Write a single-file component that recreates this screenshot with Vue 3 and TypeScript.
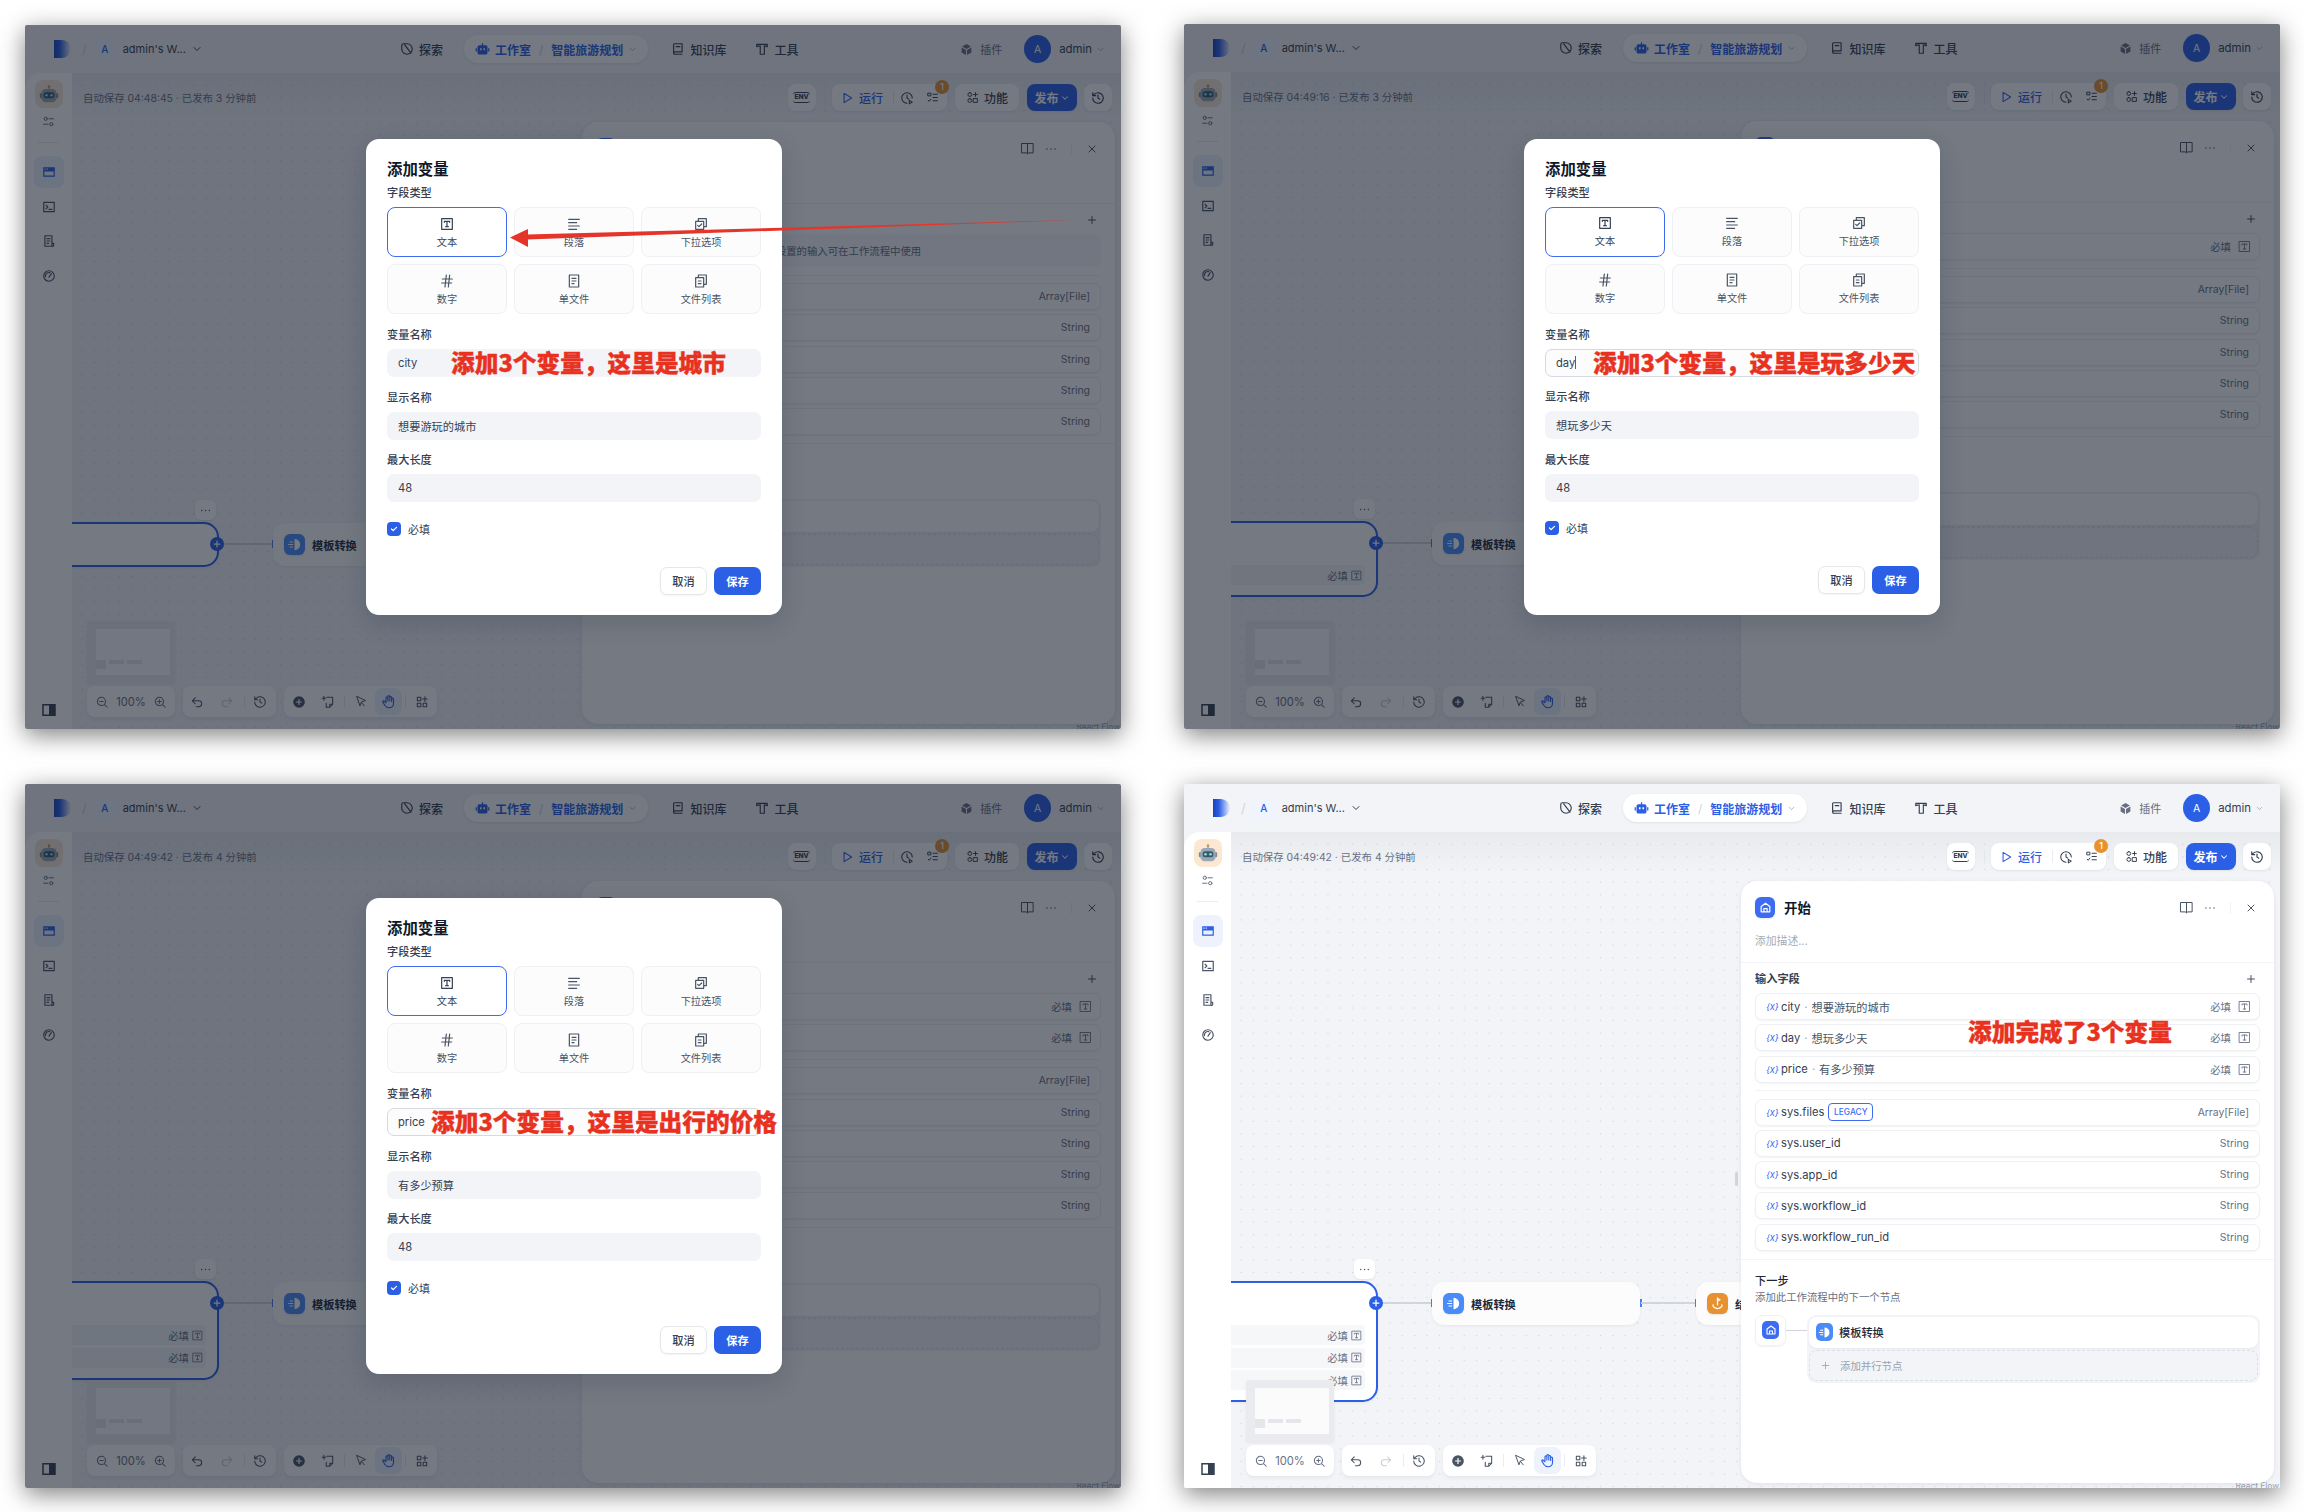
<script setup lang="ts">
import { h } from "vue"

interface Field { name: string; label: string }
interface Win {
  saved: string
  mins: number
  dim: boolean
  vars: Field[]
  focus?: boolean
  caret?: boolean
  form?: Field
  note: string
  noteX: number
  noteY: number
  arrow?: boolean
  shift?: boolean
}

const paths: Record<string, string> = {
  explore: "M12 3a9 9 0 1 1-9 9V6a3 3 0 0 1 3-3z M8 5l11 14",
  robot: "M11 2h2v3h4a3 3 0 0 1 3 3v9a3 3 0 0 1-3 3H7a3 3 0 0 1-3-3V8a3 3 0 0 1 3-3h4z M8 10v3h2.5v-3z M13.5 10v3H16v-3z M1 10h2v5H1z M21 10h2v5h-2z",
  book: "M6 3h13v14H7a2.5 2.5 0 0 0-2.5 2V5A2 2 0 0 1 6 3z M4.5 19A2 2 0 0 0 7 21h12 M9 8h6",
  tool: "M3 4h18v4l-5-1.5V21H9V6.5L3 8z",
  cube: "M12 2l8 4.5-8 4.5-8-4.5z M3 8.5l8 4.5v9l-8-4.5z M21 8.5l-8 4.5v9l8-4.5z",
  chev: "M6 9l6 6 6-6",
  sliders: "M13 7h8 M3 17h8 M10 7a3 3 0 1 1-6 0 3 3 0 0 1 6 0z M20 17a3 3 0 1 1-6 0 3 3 0 0 1 6 0z",
  win: "M2 4h20v16H2z M4 11h16v7H4z M4 6v2h2V6z M8 6v2h2V6z",
  term: "M3 4h18v16H3z M7 9l3 3-3 3 M12 16h5",
  log: "M5 3h12v18H5z M8.5 8h5 M8.5 12h5 M8.5 16h3 M17 16h3v3a2 2 0 0 1-3 2",
  gauge: "M12 3a9 9 0 1 0 0 18 9 9 0 0 0 0-18z M12 14l4-6 M6 13a6 6 0 0 1 7.5-6.8",
  play: "M7 4l13 8-13 8z",
  clock: "M21 12a9 9 0 1 0-9 9 M12 7v5l3 2 M16 16l5 3-5 3z",
  check: "M13 6h8 M13 12h8 M4 4h5v5H4z M4 17l2 2 3-4 M13 18h8",
  apps: "M7 3a3.5 3.5 0 1 1 0 7 3.5 3.5 0 0 1 0-7z M7 14a3.5 3.5 0 1 1 0 7 3.5 3.5 0 0 1 0-7z M17.5 3v7 M14 6.5h7 M14 14h7v7h-7z",
  hist: "M3 12a9 9 0 1 0 3-6.7L3 8 M3 3v5h5 M12 7v5l3 2",
  home: "M4 10l8-6 8 6v10H4z M9 20v-6h6v6",
  open: "M3 4h18v15h-7l-2 1.5L10 19H3z M12 4v16",
  dots: "M5 12h.01 M12 12h.01 M19 12h.01",
  x: "M6 6l12 12 M18 6L6 18",
  plus: "M12 5v14 M5 12h14",
  text: "M4 4h16v16H4z M8 9.5V8h8v1.5 M12 8v8 M10 16h4",
  para: "M4 5h16 M4 10h12 M4 15h16 M4 20h12",
  select: "M8 8V4h12v12h-4 M4 8h12v12H4z M7 14l2 2 4-4",
  hash: "M5 9h15 M4 15h15 M11 3L9 21 M16 3l-2 18",
  file: "M5 3h14v18H5z M9 8h6 M9 12h6 M9 16h3",
  files: "M8 7V3h12v14h-4 M4 7h12v14H4z M8 12h4 M8 16h4",
  zoomout: "M11 4a7 7 0 1 1 0 14 7 7 0 0 1 0-14z M8 11h6 M21 21l-5-5",
  zoomin: "M11 4a7 7 0 1 1 0 14 7 7 0 0 1 0-14z M8 11h6 M11 8v6 M21 21l-5-5",
  undo: "M9 5L4 10l5 5 M4 10h11a5 5 0 0 1 0 10h-4",
  redo: "M15 5l5 5-5 5 M20 10H9a5 5 0 0 0 0 10h4",
  addc: "M12 2a10 10 0 1 0 0 20 10 10 0 0 0 0-20z M11 7h2v4h4v2h-4v4h-2v-4H7v-2h4z",
  note: "M10 4h10v12l-5 5H9v-7 M15 21v-5h5 M5 2v7 M2 5.5h6",
  cursor: "M5 3l6 17 2.5-7 7-2.5z M14 14l5 6",
  hand: "M8 12V6a1.5 1.5 0 0 1 3 0v5 M11 11V4a1.5 1.5 0 0 1 3 0v7 M14 11V5.5a1.5 1.5 0 0 1 3 0V12 M17 12V8a1.5 1.5 0 0 1 3 0v7c0 4-3 7-7 7-3 0-5-1-7-4l-3-5c-.8-1.4 1.2-2.6 2.2-1.4L8 14",
  grid: "M4 4h6v6H4z M4 14h6v6H4z M14 14h6v6h-6z M17 3v8 M13 7h8",
  tpl: "M12 4a8 8 0 0 1 0 16z M5 7.6h5v1.6H5z M3 11.2h7v1.6H3z M5 14.8h5v1.6H5z",
  end: "M12 3v11 M12 4l4 2-4 2 M5 14c-1.5 3 3 6 7 6s8.5-3 7-6",
  toggle: "M3 4h18v16H3z M5 6h7v12H5z",
  tick: "M6 12l4 4 8-8",
}

const Ico = (p: { n: string; s?: number; w?: number }) =>
  h(
    "svg",
    { viewBox: "0 0 24 24", width: p.s ?? 14, height: p.s ?? 14, fill: "none", stroke: "currentColor", "stroke-width": p.w ?? 2, "stroke-linecap": "round", "stroke-linejoin": "round" },
    h("path", { d: paths[p.n], "fill-rule": "evenodd" }),
  )
Ico.props = ["n", "s", "w"]

const city = { name: "city", label: "想要游玩的城市" }
const day = { name: "day", label: "想玩多少天" }
const price = { name: "price", label: "有多少预算" }

const windows: Win[] = [
  { saved: "04:48:45", mins: 3, dim: true, vars: [], form: city, note: "添加3个变量，这里是城市", noteX: 426, noteY: 321, arrow: true },
  { saved: "04:49:16", mins: 3, dim: true, vars: [city], form: day, focus: true, caret: true, note: "添加3个变量，这里是玩多少天", noteX: 409, noteY: 322, shift: true },
  { saved: "04:49:42", mins: 4, dim: true, vars: [city, day], form: price, focus: true, note: "添加3个变量，这里是出行的价格", noteX: 406, noteY: 321 },
  { saved: "04:49:42", mins: 4, dim: false, vars: [city, day, price], note: "添加完成了3个变量", noteX: 784, noteY: 231 },
]

const sideIcons = ["term", "log", "gauge"]
const fieldTypes = [
  { icon: "text", label: "文本" },
  { icon: "para", label: "段落" },
  { icon: "select", label: "下拉选项" },
  { icon: "hash", label: "数字" },
  { icon: "file", label: "单文件" },
  { icon: "files", label: "文件列表" },
]
const sysVars = ["sys.user_id", "sys.app_id", "sys.workflow_id", "sys.workflow_run_id"]
</script>

<template>
  <div class="page">
    <div v-for="(w, i) in windows" :key="i" class="win" :class="{ shift: w.shift }">
      <header class="topbar">
        <div class="brand">
          <svg class="logo" width="18" height="18" viewBox="0 0 18 18">
            <defs>
              <linearGradient id="lg" x1="0" x2="1" y1="0" y2="0">
                <stop offset="0" stop-color="#1d41b8" />
                <stop offset="0.35" stop-color="#2b5fe6" />
                <stop offset="1" stop-color="#eef1fb" />
              </linearGradient>
            </defs>
            <path d="M0 0h8a9 9 0 0 1 0 18H0z" fill="url(#lg)" />
          </svg>
          <span class="slash">/</span>
          <span class="ws-a">A</span>
          <span class="ws-name">admin's W...</span>
          <Ico n="chev" :s="12" class="ws-chev" />
        </div>
        <nav class="nav">
          <span class="nav-item"><Ico n="explore" :s="14" />探索</span>
          <span class="pill">
            <Ico n="robot" :s="15" class="filled" />
            <b>工作室</b>
            <span class="pill-slash">/</span>
            <b>智能旅游规划</b>
            <Ico n="chev" :s="9" class="pill-chev" />
          </span>
          <span class="nav-item kb"><Ico n="book" :s="14" />知识库</span>
          <span class="nav-item tools"><Ico n="tool" :s="14" />工具</span>
        </nav>
        <div class="account">
          <span class="plugin"><Ico n="cube" :s="13" class="filled" />插件</span>
          <span class="avatar">A</span>
          <span class="acc-name">admin</span>
          <Ico n="chev" :s="9" class="acc-chev" />
        </div>
      </header>

      <div class="body">
        <aside class="side">
          <div class="bot">
            <svg width="20" height="20" viewBox="0 0 24 24">
              <circle cx="12" cy="3" r="1.6" fill="#e8912f" />
              <rect x="11.3" y="3" width="1.4" height="4" fill="#8a96a8" />
              <rect x="1" y="11" width="3" height="6" rx="1" fill="#7b8798" />
              <rect x="20" y="11" width="3" height="6" rx="1" fill="#7b8798" />
              <rect x="3" y="6" width="18" height="16" rx="5" fill="#9aa7b8" />
              <rect x="5.5" y="10" width="13" height="7" rx="3" fill="#3c5a66" />
              <circle cx="9" cy="13.5" r="1.6" fill="#7fe0e8" />
              <circle cx="15" cy="13.5" r="1.6" fill="#7fe0e8" />
            </svg>
          </div>
          <Ico n="sliders" :s="13" :w="1.8" class="side-cfg" />
          <span class="side-div"></span>
          <span class="side-on"><Ico n="win" :s="14" class="filled" /></span>
          <span v-for="s in sideIcons" :key="s" class="side-item"><Ico :n="s" :s="14" /></span>
          <Ico n="toggle" :s="18" class="filled side-toggle" />
        </aside>

        <main class="canvas">
          <div class="tools-row">
            <span class="saved">自动保存 {{ w.saved }} · 已发布 {{ w.mins }} 分钟前</span>
            <span class="btn env"><span class="env-t">ENV</span></span>
            <span class="tool-sep"></span>
            <span class="btn run">
              <span class="run-go"><Ico n="play" :s="14" :w="1.8" />运行</span>
              <span class="run-sep"></span>
              <Ico n="clock" :s="14" :w="1.8" class="ink clk" />
              <Ico n="check" :s="13" :w="1.8" class="ink chk" />
              <span class="count">1</span>
            </span>
            <span class="btn feat"><Ico n="apps" :s="13" :w="1.8" />功能</span>
            <span class="btn pub">发布<Ico n="chev" :s="10" :w="2.5" /></span>
            <span class="btn env"><Ico n="hist" :s="14" /></span>
          </div>

          <div class="node start" :class="{ empty: !w.vars.length }">
            <div v-for="v in w.vars" :key="v.name" class="node-row">
              必填<Ico n="text" :s="13" :w="1.5" />
            </div>
          </div>
          <span class="node-more"><Ico n="dots" :s="13" :w="2.6" /></span>
          <span class="edge e1"></span>
          <span class="add"><Ico n="plus" :s="10" :w="3" /></span>
          <span class="handle h1"></span>
          <div class="node tplnode">
            <span class="badge tpl"><Ico n="tpl" :s="17" class="filled" /></span>模板转换
          </div>
          <span class="handle h2"></span>
          <span class="edge e2"></span>
          <span class="handle h3"></span>
          <div class="node endnode">
            <span class="badge end"><Ico n="end" :s="15" /></span>结束
          </div>
          <span class="rf">React Flow</span>
          <span class="resize"></span>

          <div class="ctrl">
            <div class="mini">
              <div class="mini-in">
                <span class="m-block"></span>
                <span class="m-bar"></span>
                <span class="m-bar"></span>
              </div>
            </div>
            <div class="ctrl-row">
              <div class="group zoom">
                <Ico n="zoomout" :s="14" :w="1.8" />
                <span>100%</span>
                <Ico n="zoomin" :s="14" :w="1.8" />
              </div>
              <div class="group hist">
                <Ico n="undo" :s="14" :w="1.8" />
                <Ico n="redo" :s="14" :w="1.8" class="off" />
                <span class="g-sep"></span>
                <Ico n="hist" :s="14" :w="1.8" />
              </div>
              <div class="group acts">
                <Ico n="addc" :s="14" class="filled" />
                <Ico n="note" :s="14" :w="1.8" />
                <span class="g-sep"></span>
                <Ico n="cursor" :s="13" :w="1.8" />
                <span class="hand"><Ico n="hand" :s="15" :w="1.8" /></span>
                <span class="g-sep"></span>
                <Ico n="grid" :s="14" :w="1.8" />
              </div>
            </div>
          </div>

          <section class="panel">
            <div class="p-head">
              <span class="badge home"><Ico n="home" :s="13" :w="2.2" /></span>
              <h2>开始</h2>
              <Ico n="open" :s="15" :w="1.6" class="p-open" />
              <Ico n="dots" :s="14" :w="2.4" class="p-dots" />
              <span class="p-sep"></span>
              <Ico n="x" :s="12" :w="2" class="p-x" />
            </div>
            <p class="p-desc">添加描述...</p>
            <div class="p-line"></div>
            <div class="sec-title">输入字段<Ico n="plus" :s="12" :w="1.8" /></div>
            <div class="rows">
              <div v-if="!w.vars.length" class="empty-row">设置的输入可在工作流程中使用</div>
              <div v-for="v in w.vars" :key="v.name" class="row">
                <i class="x">{x}</i>
                <span class="r-name">{{ v.name }}</span>
                <span class="r-dot">·</span>
                <span class="r-label">{{ v.label }}</span>
                <span class="r-req">必填</span>
                <Ico n="text" :s="15" :w="1.4" class="r-ic" />
              </div>
            </div>
            <div class="p-line mid"></div>
            <div class="rows">
              <div class="row">
                <i class="x">{x}</i>
                <span class="r-name">sys.files</span>
                <span class="legacy">LEGACY</span>
                <span class="r-type">Array[File]</span>
              </div>
              <div v-for="s in sysVars" :key="s" class="row">
                <i class="x">{x}</i>
                <span class="r-name">{{ s }}</span>
                <span class="r-type">String</span>
              </div>
            </div>
            <div class="p-line mid end-line"></div>
            <div class="next-title">下一步</div>
            <div class="next-sub">添加此工作流程中的下一个节点</div>
            <div class="next">
              <span class="next-start"><span class="badge home sm"><Ico n="home" :s="12" :w="2.2" /></span></span>
              <span class="next-line"></span>
              <div class="next-box">
                <div class="next-card"><span class="badge tpl xs"><Ico n="tpl" :s="15" class="filled" /></span>模板转换</div>
                <div class="next-add"><Ico n="plus" :s="11" :w="1.8" />添加并行节点</div>
              </div>
            </div>
          </section>
        </main>
      </div>

      <div v-if="w.dim" class="overlay">
        <div class="modal">
          <h3>添加变量</h3>
          <div class="m-label first">字段类型</div>
          <div class="types">
            <div v-for="(t, k) in fieldTypes" :key="t.icon" class="type" :class="{ on: k === 0 }">
              <Ico :n="t.icon" :s="16" :w="1.8" />
              <span>{{ t.label }}</span>
            </div>
          </div>
          <div class="m-label">变量名称</div>
          <div class="input" :class="{ focus: w.focus }">{{ w.form?.name }}<span v-if="w.caret" class="caret"></span></div>
          <div class="m-label">显示名称</div>
          <div class="input">{{ w.form?.label }}</div>
          <div class="m-label">最大长度</div>
          <div class="input">48</div>
          <label class="req"><span class="box"><Ico n="tick" :s="10" :w="3" /></span>必填</label>
          <div class="actions">
            <span class="cancel">取消</span>
            <span class="save">保存</span>
          </div>
        </div>
      </div>

      <svg v-if="w.arrow" class="arrow" width="1096" height="704">
        <path d="M1052 195L502 209.5L502 214.5z" fill="#e5352a" />
        <path d="M485 212.5L503 204V222z" fill="#e5352a" />
      </svg>
      <span class="remark" :style="{ left: w.noteX + 'px', top: w.noteY + 'px' }">{{ w.note }}</span>
    </div>
  </div>
</template>

<style>
html, body { margin: 0; background: #fff; }
</style>

<style scoped>
.page {
  width: 2304px;
  height: 1512px;
  box-sizing: border-box;
  padding: 25px 0 0 25px;
  display: grid;
  grid-template-columns: 1096px 1096px;
  grid-template-rows: 704px 704px;
  column-gap: 63px;
  row-gap: 55px;
  font-family: Inter, "Noto Sans CJK SC", sans-serif;
  color: #354052;
  background: #fff;
}
.win {
  position: relative;
  overflow: hidden;
  display: flex;
  flex-direction: column;
  background: #f2f4f7;
  box-shadow: 0 6px 24px rgba(0, 0, 0, 0.5);
  border-radius: 2px;
}
.win.shift { margin-top: -1px; }
.filled { fill: currentColor; stroke: none; }

/* top bar */
.topbar {
  height: 48px;
  flex: none;
  display: grid;
  grid-template-columns: 375px auto 1fr;
  align-items: center;
  font-size: 11.5px;
}
.brand { display: flex; align-items: center; padding-left: 29px; }
.slash { margin-left: 10px; color: #d0d5dc; font-size: 13px; }
.ws-a {
  width: 24px;
  height: 23px;
  margin-left: 6px;
  border-radius: 6px;
  background: #eff4ff;
  color: #2b5fe6;
  font-size: 10px;
  font-weight: 500;
  display: flex;
  align-items: center;
  justify-content: center;
}
.ws-name { margin-left: 6px; font-size: 11px; }
.ws-chev { margin-left: 5px; }
.nav { display: flex; align-items: center; gap: 21px; }
.nav-item { display: flex; align-items: center; gap: 5px; font-weight: 500; font-size: 12px; }
.nav-item.kb { margin-left: 2px; }
.nav-item.tools { margin-left: 8px; }
.pill {
  height: 28px;
  padding: 0 11px;
  border-radius: 14px;
  background: #fff;
  box-shadow: 0 1px 3px rgba(16, 24, 40, 0.08);
  display: flex;
  align-items: center;
  gap: 5px;
  color: #2b5fe6;
  font-size: 12px;
}
.pill b { font-weight: 600; }
.pill-slash { color: #d0d5dc; margin: 0 3px; }
.pill-chev { color: #98a2b3; }
.account { display: flex; align-items: center; justify-content: flex-end; padding-right: 16px; }
.plugin { display: flex; align-items: center; gap: 7px; font-size: 11px; color: #676f83; margin-right: 22px; }
.avatar {
  width: 27px;
  height: 28px;
  border-radius: 50%;
  background: #2b5fe6;
  color: #fff;
  font-size: 10.5px;
  display: flex;
  align-items: center;
  justify-content: center;
}
.acc-name { margin-left: 8px; font-size: 11.4px; }
.acc-chev { margin-left: 4px; color: #98a2b3; }

/* body */
.body { flex: 1; display: flex; min-height: 0; }
.side {
  width: 47px;
  flex: none;
  background: #fff;
  border-top-left-radius: 16px;
  display: flex;
  flex-direction: column;
  align-items: center;
  padding-top: 7px;
  box-sizing: border-box;
}
.bot {
  width: 28px;
  height: 28px;
  border-radius: 8px;
  background: #fbe8d3;
  display: flex;
  align-items: center;
  justify-content: center;
}
.side-cfg { margin-top: 7px; color: #676f83; }
.side-div { width: 21px; height: 1px; background: #eaecf0; margin: 14px 0 13px; }
.side-on {
  width: 30px;
  height: 32px;
  border-radius: 8px;
  background: #eef2fd;
  color: #2b5fe6;
  display: flex;
  align-items: center;
  justify-content: center;
}
.side-item {
  width: 30px;
  height: 32px;
  margin-top: 2.6px;
  display: flex;
  align-items: center;
  justify-content: center;
  color: #495464;
}
.side-toggle { margin-top: auto; margin-bottom: 10px; color: #354052; }

.canvas {
  position: relative;
  flex: 1;
  min-width: 0;
  overflow: hidden;
  display: flex;
  flex-direction: column;
  background-color: #f2f4f7;
  background-image: linear-gradient(180deg, rgba(16, 24, 40, 0.045), rgba(16, 24, 40, 0) 44px), radial-gradient(circle, #d5d9e0 0.8px, transparent 1px);
  background-size: auto, 12.4px 12.6px;
  background-position: 0 0, 4px 6px;
}
.tools-row {
  display: flex;
  align-items: center;
  padding: 11px 9px 0 11px;
  height: 27px;
  flex: none;
}
.saved { font-size: 10.4px; color: #676f83; margin-right: auto; }
.btn {
  height: 27px;
  background: #fff;
  border-radius: 8px;
  box-shadow: 0 1px 2px rgba(16, 24, 40, 0.07);
  display: flex;
  align-items: center;
  justify-content: center;
  box-sizing: border-box;
  font-size: 12px;
  font-weight: 500;
}
.env { width: 28px; }
.env-t {
  font-size: 6.6px;
  font-weight: 800;
  line-height: 9px;
  padding: 0 1px;
  border-top: 1px solid #354052;
  border-bottom: 1px solid #354052;
  border-radius: 3px;
}
.tool-sep { width: 1px; height: 14px; background: #e4e7ec; margin: 0 6.5px 0 9px; }
.run { width: 115px; position: relative; justify-content: flex-start; padding-left: 8px; color: #2b5fe6; }
.run-go { display: flex; align-items: center; gap: 5px; }
.run-sep { width: 1px; height: 13px; background: #eaecf0; margin-left: 10px; }
.ink { color: #354052; }
.clk { margin-left: 6px; }
.chk { margin-left: 12px; }
.count {
  position: absolute;
  right: -2px;
  top: -4px;
  width: 14px;
  height: 14px;
  border-radius: 50%;
  background: #e8912f;
  color: #fff;
  font-size: 9px;
  text-align: center;
  line-height: 14px;
}
.feat { width: 64px; margin-left: 8px; gap: 5px; }
.pub { width: 50px; margin-left: 8px; background: #2b5fe6; color: #fff; gap: 1px; font-weight: 600; }
.btn.env:last-child { margin-left: 7px; }

/* free canvas: nodes */
.node { position: absolute; box-sizing: border-box; background: #fcfcfd; box-shadow: 0 1px 3px rgba(16, 24, 40, 0.06); }
.start {
  left: -100px;
  top: 449px;
  width: 247px;
  padding: 42px 11px 10px 20px;
  border: 2px solid #2b5fe6;
  border-radius: 15px;
  display: flex;
  flex-direction: column;
  gap: 2.6px;
  background: #fff;
}
.start.empty { height: 45px; padding: 0; }
.node-row {
  height: 20px;
  flex: none;
  background: #f6f7f9;
  border-radius: 4px;
  display: flex;
  align-items: center;
  justify-content: flex-end;
  gap: 2px;
  padding-right: 2px;
  font-size: 10.4px;
  color: #676f83;
}
.node-more {
  position: absolute;
  left: 123px;
  top: 427px;
  width: 21px;
  height: 20px;
  border-radius: 6px;
  background: #fff;
  color: #495464;
  box-shadow: 0 1px 2px rgba(16, 24, 40, 0.08);
  display: flex;
  align-items: center;
  justify-content: center;
}
.add {
  position: absolute;
  left: 138px;
  top: 464px;
  width: 14px;
  height: 14px;
  border-radius: 50%;
  background: #2b5fe6;
  color: #fff;
  display: flex;
  align-items: center;
  justify-content: center;
}
.edge { position: absolute; height: 2px; background: #d0d5dc; top: 470px; }
.e1 { left: 150px; width: 50px; }
.e2 { left: 410px; width: 54px; }
.handle { position: absolute; width: 2px; height: 8px; background: #4f7cf0; top: 467px; }
.h1 { left: 200px; }
.h2 { left: 409px; }
.h3 { left: 464px; }
.tplnode, .endnode {
  top: 450px;
  height: 43px;
  border-radius: 12px;
  display: flex;
  align-items: center;
  gap: 7px;
  padding-left: 11px;
  font-size: 11.2px;
  font-weight: 600;
  color: #1d2939;
}
.tplnode { left: 201px; width: 208px; }
.endnode { left: 465px; width: 150px; }
.badge {
  flex: none;
  width: 21px;
  height: 21px;
  border-radius: 6px;
  color: #fff;
  display: flex;
  align-items: center;
  justify-content: center;
  box-shadow: 0 1px 2px rgba(16, 24, 40, 0.1);
}
.tpl { background: #4a8cf7; }
.end { background: #e8912f; }
.home { background: #3d6cf2; width: 20px; }
.home.sm { width: 17px; height: 18px; border-radius: 5px; box-shadow: none; }
.tpl.xs { width: 17px; height: 18px; border-radius: 5px; box-shadow: none; }
.rf {
  position: absolute;
  right: 1px;
  bottom: -3px;
  font-size: 8.4px;
  color: #98a2b3;
}
.resize {
  position: absolute;
  left: 504px;
  top: 340px;
  width: 3px;
  height: 14px;
  border-radius: 2px;
  background: #d0d5dc;
}

/* bottom controls */
.ctrl {
  position: relative;
  z-index: 2;
  margin-top: auto;
  padding: 0 0 12px 15px;
  width: 400px;
}
.mini {
  width: 88px;
  height: 62px;
  box-sizing: border-box;
  padding: 8px 5px 8px 9px;
  background: #e9ebee;
  border-radius: 3px;
  box-shadow: 0 1px 3px rgba(16, 24, 40, 0.06);
}
.mini-in {
  height: 46px;
  box-sizing: border-box;
  padding-top: 31px;
  background: #fbfbfc;
  display: flex;
  align-items: flex-start;
  gap: 3px;
}
.m-block { width: 10px; height: 9px; background: #e4e6ea; }
.m-bar { width: 15px; height: 4px; background: #e4e6ea; }
.ctrl-row { display: flex; gap: 8px; margin-top: 3px; }
.group {
  height: 31px;
  box-sizing: border-box;
  background: #fff;
  border-radius: 8px;
  box-shadow: 0 2px 4px rgba(16, 24, 40, 0.06);
  display: flex;
  align-items: center;
  color: #495464;
}
.zoom { width: 88px; padding: 0 8px; justify-content: space-between; font-size: 11.2px; color: #676f83; }
.hist { width: 93px; padding-left: 7px; }
.hist > :nth-child(2) { margin-left: 16px; }
.hist > :nth-child(3) { margin-left: 10px; }
.hist > :nth-child(4) { margin-left: 8px; }
.off { color: #c9ced6; }
.g-sep { width: 1px; height: 13px; background: #eaecf0; }
.acts { width: 153px; padding-left: 8px; }
.acts > :nth-child(2) { margin-left: 15px; }
.acts > :nth-child(3) { margin-left: 9px; }
.acts > :nth-child(4) { margin-left: 9px; }
.acts > :nth-child(5) { margin-left: 8px; }
.acts > :nth-child(6) { margin-left: 2.5px; }
.acts > :nth-child(7) { margin-left: 9px; }
.hand {
  width: 27px;
  height: 27px;
  border-radius: 7px;
  background: #eef2fd;
  color: #2b5fe6;
  display: flex;
  align-items: center;
  justify-content: center;
}

/* side panel */
.panel {
  position: absolute;
  z-index: 3;
  left: 510px;
  top: 49px;
  bottom: 5px;
  width: 533px;
  box-sizing: border-box;
  padding: 16px 14px 0;
  background: #fff;
  border-radius: 16px;
  box-shadow: 0 1px 4px rgba(16, 24, 40, 0.08);
}
.p-head { display: flex; align-items: center; height: 21px; color: #495464; }
.p-head h2 { margin: -2px 0 0 9px; flex: 1; font-size: 13.4px; font-weight: 600; color: #101828; }
.p-dots { margin-left: 9px; }
.p-sep { width: 1px; height: 12px; background: #f0f1f4; margin: 0 14px 0 13px; }
.p-x { margin-right: 3px; }
.p-desc { margin: 16px 0 0; font-size: 10.8px; line-height: 16px; color: #a3abb8; }
.p-line { margin: 12px -14px 0; height: 1px; background: #f2f4f7; }
.p-line.mid { margin: 7.5px 0; }
.p-line.end-line { margin: 8px -14px 0; }
.sec-title {
  margin-top: 8px;
  line-height: 16px;
  font-size: 11.2px;
  font-weight: 600;
  color: #354052;
  display: flex;
  justify-content: space-between;
  align-items: center;
  padding-right: 3px;
}
.rows { display: flex; flex-direction: column; gap: 4.3px; }
.sec-title + .rows { margin-top: 6px; }
.row {
  height: 27px;
  box-sizing: border-box;
  padding: 0 10px;
  background: #fff;
  border: 1px solid #eef0f3;
  border-radius: 7px;
  box-shadow: 0 1px 2px rgba(16, 24, 40, 0.05);
  display: flex;
  align-items: center;
  font-size: 11.2px;
}
.empty-row {
  height: 33px;
  border-radius: 7px;
  background: #f7f8fa;
  font-size: 10.4px;
  color: #676f83;
  display: flex;
  align-items: center;
  justify-content: center;
}
.x { color: #3d6cf2; font-size: 9.4px; width: 15px; flex: none; letter-spacing: -0.2px; }
.r-name { color: #354052; }
.r-dot { color: #98a2b3; margin: 0 4px; }
.r-label { color: #495464; }
.r-req { margin-left: auto; font-size: 10.4px; color: #676f83; }
.r-ic { margin: 0 -2.5px 0 5.5px; color: #676f83; }
.r-type { margin-left: auto; font-size: 10.4px; color: #676f83; }
.legacy {
  margin-left: 4px;
  width: 45px;
  height: 18px;
  box-sizing: border-box;
  border: 1px solid #3d6cf2;
  border-radius: 4px;
  color: #3d6cf2;
  font-size: 8.4px;
  font-weight: 500;
  text-align: center;
  line-height: 16px;
}
.next-title { margin-top: 13px; line-height: 16px; font-size: 11.2px; font-weight: 500; color: #1d2939; }
.next-sub { margin-top: 1px; line-height: 16px; font-size: 10.4px; color: #676f83; }
.next { display: flex; margin-top: 9px; }
.next-start {
  width: 31px;
  height: 31px;
  box-sizing: border-box;
  border: 1px solid #f0f1f4;
  border-radius: 7px;
  box-shadow: 0 1px 2px rgba(16, 24, 40, 0.05);
  display: flex;
  align-items: center;
  justify-content: center;
}
.next-line { width: 21px; height: 1px; background: #d0d5dc; margin-top: 15px; }
.next-box {
  flex: 1;
  box-sizing: border-box;
  padding: 2px;
  background: #f2f4f7;
  border-radius: 9px;
  display: flex;
  flex-direction: column;
  gap: 2px;
}
.next-card {
  height: 31px;
  background: #fff;
  border-radius: 8px;
  display: flex;
  align-items: center;
  gap: 6px;
  padding-left: 7px;
  font-size: 11.2px;
  font-weight: 500;
  color: #1d2939;
  box-shadow: 0 1px 2px rgba(16, 24, 40, 0.05);
}
.next-add {
  height: 31px;
  box-sizing: border-box;
  border: 1px dashed #dcdfe5;
  border-radius: 8px;
  display: flex;
  align-items: center;
  gap: 9px;
  padding-left: 10px;
  font-size: 10.4px;
  color: #98a2b3;
}

/* modal */
.overlay {
  position: absolute;
  z-index: 5;
  inset: 0;
  background: rgba(16, 24, 40, 0.58);
  display: flex;
  align-items: center;
  justify-content: center;
}
.win:nth-child(odd) .overlay { padding-left: 2px; }
.modal {
  width: 416px;
  height: 476px;
  box-sizing: border-box;
  padding: 20px 21px 0;
  background: #fff;
  border-radius: 13px;
  box-shadow: 0 8px 24px rgba(16, 24, 40, 0.15);
}
.modal h3 { margin: 0; line-height: 22px; font-size: 15.4px; font-weight: 600; color: #101828; }
.m-label { margin-top: 12.5px; line-height: 16px; font-size: 11.2px; font-weight: 500; color: #354052; }
.m-label.first { margin-top: 4px; }
.types { margin-top: 6px; margin-bottom: 13px; display: grid; grid-template-columns: repeat(3, 1fr); gap: 7px; }
.type {
  height: 50px;
  box-sizing: border-box;
  padding-top: 7.5px;
  border: 1px solid #eef0f3;
  border-radius: 8px;
  background: #fcfcfd;
  display: flex;
  flex-direction: column;
  align-items: center;
  gap: 3px;
  font-size: 10.2px;
  line-height: 14px;
  color: #495464;
}
.type.on { background: #fff; border: 1.5px solid #3d6cf2; color: #354052; }
.input {
  margin-top: 6px;
  height: 28px;
  box-sizing: border-box;
  padding: 0 11px;
  border-radius: 7px;
  background: #f2f4f7;
  display: flex;
  align-items: center;
  font-size: 11.2px;
  color: #354052;
}
.input.focus { background: #fcfcfd; border: 1px solid #d5d9e0; padding-left: 10px; }
.caret { width: 1px; height: 13px; background: #2b5fe6; }
.req {
  margin-top: 19.5px;
  height: 14px;
  display: flex;
  align-items: center;
  gap: 7px;
  font-size: 11px;
  color: #354052;
}
.box {
  width: 14px;
  height: 14px;
  border-radius: 4px;
  background: #2b5fe6;
  color: #fff;
  display: flex;
  align-items: center;
  justify-content: center;
}
.actions { margin-top: 31px; display: flex; justify-content: flex-end; gap: 7px; }
.cancel, .save {
  width: 47px;
  height: 28px;
  box-sizing: border-box;
  border-radius: 7px;
  font-size: 11.2px;
  font-weight: 500;
  display: flex;
  align-items: center;
  justify-content: center;
}
.cancel { border: 1px solid #e4e7ec; background: #fff; box-shadow: 0 1px 2px rgba(16, 24, 40, 0.05); }
.save { background: #2b5fe6; color: #fff; font-weight: 600; }

/* red marks drawn over the screenshot */
.arrow { position: absolute; z-index: 6; left: 0; top: 0; }
.remark {
  position: absolute;
  z-index: 6;
  white-space: nowrap;
  line-height: 32px;
  font-family: "Noto Sans CJK SC", sans-serif;
  font-size: 23.7px;
  font-weight: 900;
  -webkit-text-stroke: 0.4px #e8321f;
  color: #e8321f;
}
</style>
